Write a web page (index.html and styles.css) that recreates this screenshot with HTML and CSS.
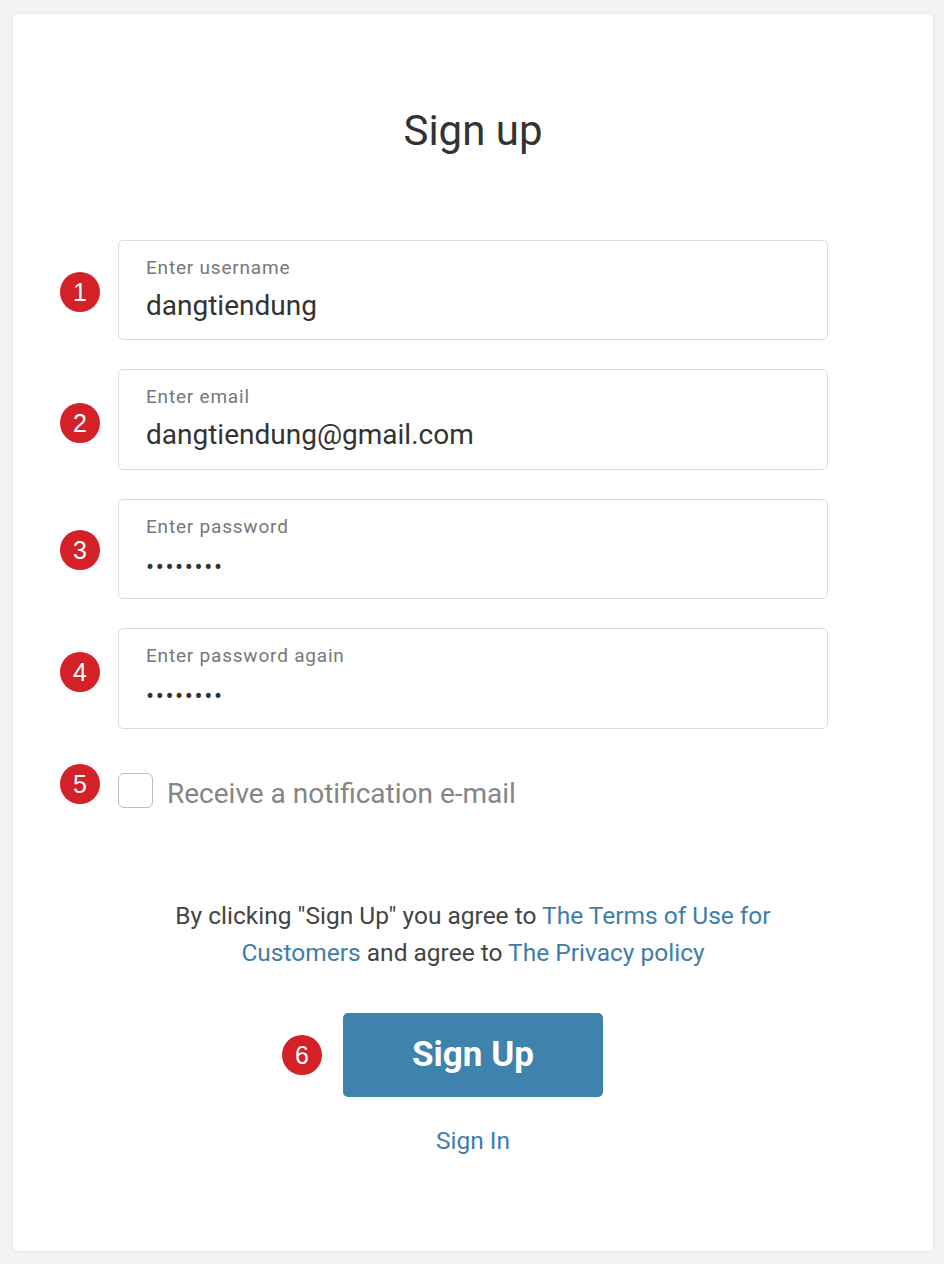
FILE: index.html
```html
<!DOCTYPE html>
<html lang="en">
<head>
<meta charset="utf-8">
<title>Sign up</title>
<link rel="stylesheet" href="styles.css">
</head>
<body>
<div class="card">
  <h1 class="title">Sign up</h1>
  <form class="form">
    <div class="field">
      <span class="badge badge-1">1</span>
      <div class="label">Enter username</div>
      <div class="value">dangtiendung</div>
    </div>
    <div class="field">
      <span class="badge badge-2">2</span>
      <div class="label">Enter email</div>
      <div class="value">dangtiendung@gmail.com</div>
    </div>
    <div class="field">
      <span class="badge badge-3">3</span>
      <div class="label">Enter password</div>
      <div class="value dots">&bull;&bull;&bull;&bull;&bull;&bull;&bull;&bull;</div>
    </div>
    <div class="field">
      <span class="badge badge-4">4</span>
      <div class="label">Enter password again</div>
      <div class="value dots">&bull;&bull;&bull;&bull;&bull;&bull;&bull;&bull;</div>
    </div>
    <label class="check-row">
      <span class="badge badge-5">5</span>
      <span class="checkbox"></span>
      <span class="check-text">Receive a notification e-mail</span>
    </label>
  </form>
  <p class="terms">By clicking "Sign Up" you agree to <a href="#">The Terms of Use for Customers</a> and agree to <a href="#">The Privacy policy</a></p>
  <div class="btn-wrap">
    <button class="btn" type="button"><span class="badge badge-6">6</span>Sign Up</button>
  </div>
  <a class="signin" href="#">Sign In</a>
</div>
</body>
</html>
```
FILE: styles.css
```css
* { box-sizing: border-box; }
html, body { margin: 0; padding: 0; }
body {
  background: #f4f4f4;
  font-family: Roboto, "Liberation Sans", Arial, sans-serif;
  color: #333;
  padding: 14px 11px 13px 13px;
}
.card {
  width: 920px;
  height: 1237px;
  background: #fff;
  border-radius: 5px;
  box-shadow: 0 0 4px rgba(0,0,0,0.08);
  display: flex;
  flex-direction: column;
  align-items: center;
}
.title {
  margin: 92px 0 0;
  font-size: 42px;
  font-weight: 400;
  line-height: 50px;
  color: #333;
}
.form {
  margin-top: 84px;
  width: 710px;
  display: flex;
  flex-direction: column;
  gap: 29px;
}
.field {
  position: relative;
  height: 100.4px;
  border: 1px solid #dcdcdc;
  border-radius: 5px;
  padding: 15px 27px 0;
}
.label {
  font-size: 19px;
  letter-spacing: 0.8px;
  line-height: 24px;
  color: #777;
}
.value {
  margin-top: 8px;
  font-size: 28px;
  line-height: 36px;
  color: #333;
}
.dots {
  margin-top: 10px;
  font-size: 24px;
  letter-spacing: 1.6px;
  color: #333;
}
.badge {
  position: absolute;
  width: 40px;
  height: 40px;
  border-radius: 50%;
  background: #d42027;
  color: #fff;
  font-family: "Liberation Sans", Arial, sans-serif;
  font-size: 25px;
  font-weight: 400;
  letter-spacing: 0;
  line-height: 40px;
  text-align: center;
  left: -59px;
}
.badge-1 { top: 31px; }
.badge-2 { top: 33px; }
.badge-3 { top: 30px; }
.badge-4 { top: 23px; }
.check-row {
  position: relative;
  margin-top: 15px;
  display: flex;
  align-items: center;
  gap: 14px;
  height: 35px;
}
.badge-5 { top: -9px; left: -58px; }
.checkbox {
  width: 35px;
  height: 35px;
  border: 1px solid #bdbdbd;
  border-radius: 6px;
  background: #fff;
}
.check-text {
  font-size: 28px;
  color: #858585;
  line-height: 35px;
  margin-top: 7px;
}
.terms {
  margin: 89px 0 0;
  width: 640px;
  text-align: center;
  font-size: 24.5px;
  line-height: 37px;
  color: #444;
}
.terms a, .signin {
  color: #3e7ea8;
  text-decoration: none;
}
.btn-wrap {
  margin-top: 42px;
}
.btn {
  position: relative;
  width: 260px;
  height: 84px;
  border: 0;
  border-radius: 5px;
  background: #3f82ab;
  color: #fff;
  font-family: Roboto, "Liberation Sans", Arial, sans-serif;
  font-size: 35px;
  font-weight: 700;
  padding: 0;
}
.badge-6 { left: -61px; top: 22px; font-weight: 400; }
.signin {
  margin-top: 29px;
  font-size: 24.5px;
  line-height: 30px;
}
```
